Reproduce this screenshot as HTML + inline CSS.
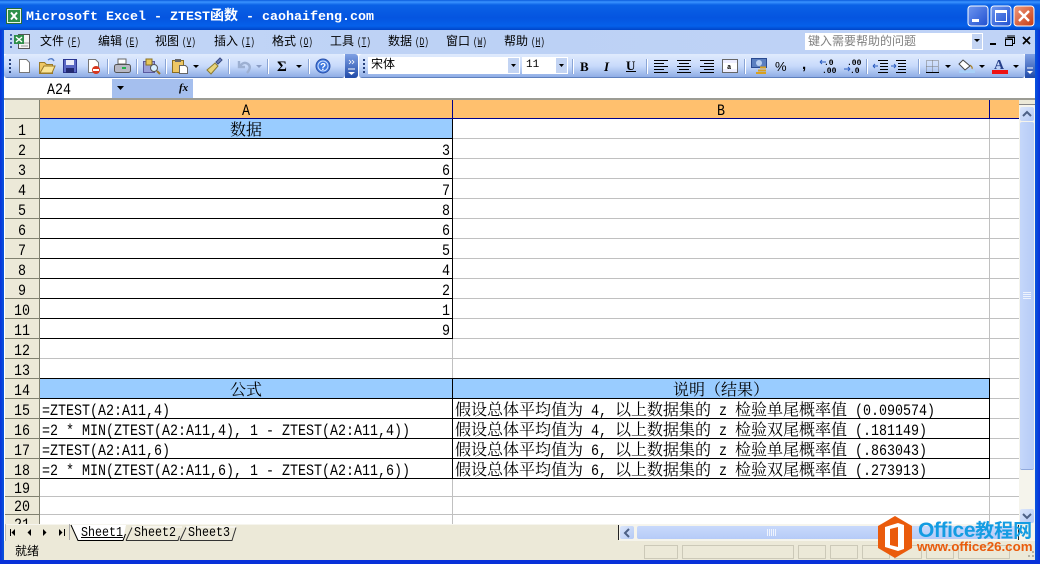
<!DOCTYPE html>
<html lang="zh"><head><meta charset="utf-8"><title>Microsoft Excel</title>
<style>
html,body{margin:0;padding:0;background:#fff}
#w{position:relative;width:1040px;height:564px;overflow:hidden;background:#fff;font-family:"Noto Serif CJK SC","Liberation Mono",serif;font-size:16px;color:#000}
#w div,#w svg{position:absolute}
i{font-style:normal;font-family:"Liberation Mono",monospace;font-size:16px;display:inline-block;transform:scaleX(.8333);transform-origin:0 50%;white-space:pre;text-align:left}
.w8{width:8px}.w16{width:16px}.w24{width:24px}.w32{width:32px}.w80{width:80px}.w88{width:88px}
.tx{white-space:pre;line-height:20px;height:20px}
.rh{left:5px;width:34px;height:19px;background:#ece9d8;border-bottom:1px solid #808070;border-right:1px solid #808070;text-align:center;line-height:20px;overflow:hidden}
.g{height:1px;background:#c0c0c0;left:40px;width:979px}
.k{height:1px;background:#000;left:40px}
.n{left:40px;width:410px;text-align:right;line-height:20px;height:19px}
.m{top:33px;font-family:"Noto Sans CJK SC",sans-serif;font-size:12px;line-height:16px;white-space:pre;color:#000}
.m i{font-size:11px;transform:scaleX(.7);margin-left:3px;width:14px}
.sep{top:59px;width:1px;height:15px;background:#8aa5d6;box-shadow:1px 0 0 #fff}
.s{top:522px;font-size:14px;line-height:18px;height:18px;white-space:pre}
.s i{font-size:14px}
.b{top:545px;height:12px;border:1px solid #ccc9b8}
</style></head><body>
<div id="w">
<!-- title bar -->
<div style="left:0;top:0;width:1040px;height:30px;background:linear-gradient(#0a5bdc 0,#3a93ff 2px,#0a62e6 5px,#0555e0 18px,#0560ea 26px,#0045c8 30px)"></div>
<svg style="left:6px;top:8px" width="16" height="16" viewBox="0 0 16 16"><rect x=".5" y=".5" width="15" height="15" fill="#e8f4e8" stroke="#2a6d3a"/><rect x="2" y="2" width="12" height="12" fill="#2f8f4a"/><path d="M5 4.500l6 7M11 4.500l-6 7" stroke="#fff" stroke-width="2"/></svg>
<div style="left:26px;top:7px;color:#fff;font-weight:bold;white-space:pre;line-height:17px;font-size:14px;font-family:'Noto Sans CJK SC',sans-serif"><span style="font:bold 13.33px 'Liberation Mono',monospace">Microsoft Excel - ZTEST</span>函数<span style="font:bold 13.33px 'Liberation Mono',monospace"> - caohaifeng.com</span></div>
<svg style="left:967px;top:5px" width="68" height="22" viewBox="0 0 68 22">
<defs><linearGradient id="bb" x1="0" y1="0" x2="1" y2="1"><stop offset="0" stop-color="#6f97ef"/><stop offset="1" stop-color="#1f4fd0"/></linearGradient><linearGradient id="rb" x1="0" y1="0" x2="1" y2="1"><stop offset="0" stop-color="#ef9a7c"/><stop offset="1" stop-color="#c63a12"/></linearGradient></defs>
<rect x="1" y="1" width="20" height="20" rx="3" fill="url(#bb)" stroke="#fff"/><rect x="5" y="14" width="7" height="3" fill="#fff"/>
<rect x="24" y="1" width="20" height="20" rx="3" fill="url(#bb)" stroke="#fff"/><rect x="28.5" y="5.5" width="11" height="11" fill="none" stroke="#fff"/><rect x="28" y="5" width="12" height="3" fill="#fff"/>
<rect x="47" y="1" width="20" height="20" rx="3" fill="url(#rb)" stroke="#fff"/><path d="M52 6l10 10M62 6l-10 10" stroke="#fff" stroke-width="2.4"/></svg>
<!-- menu bar -->
<div style="left:4px;top:30px;width:1031px;height:24px;background:linear-gradient(90deg,#c3d6f6,#bcd1f5 50%,#c0d3f6)"></div>
<svg style="left:9px;top:32px" width="24" height="20" viewBox="0 0 24 20"><path d="M1 3h2M1 7h2M1 11h2M1 15h2" stroke="#1c3f90" stroke-width="1.4"/><rect x="9.500" y="2.500" width="11" height="14" fill="#f4f4f4" stroke="#555"/><rect x="5" y="3" width="10" height="9" fill="#2f8f4a"/><path d="M7 5l6 5M13 5l-6 5" stroke="#fff" stroke-width="1.4"/><path d="M12 14h7M15 11h5" stroke="#999"/></svg>
<div class="m" style="left:40px">文件<i>(<u>F</u>)</i></div>
<div class="m" style="left:98px">编辑<i>(<u>E</u>)</i></div>
<div class="m" style="left:155px">视图<i>(<u>V</u>)</i></div>
<div class="m" style="left:214px">插入<i>(<u>I</u>)</i></div>
<div class="m" style="left:272px">格式<i>(<u>O</u>)</i></div>
<div class="m" style="left:330px">工具<i>(<u>T</u>)</i></div>
<div class="m" style="left:388px">数据<i>(<u>D</u>)</i></div>
<div class="m" style="left:446px">窗口<i>(<u>W</u>)</i></div>
<div class="m" style="left:504px">帮助<i>(<u>H</u>)</i></div>
<div style="left:805px;top:33px;width:178px;height:17px;background:#fff"></div>
<div style="left:972px;top:34px;width:10px;height:15px;background:#c3d4f3"></div>
<svg style="left:972px;top:38px" width="10" height="6"><path d="M2 1h6l-3 3z" fill="#000"/></svg>
<div class="m" style="left:808px;color:#808080">键入需要帮助的问题</div>
<svg style="left:988px;top:34px" width="46" height="14" viewBox="0 0 46 14"><rect x="2" y="9" width="6" height="2"/><path d="M17.500 5.500h7v6h-7zM19.500 3.500h7v6h-2" fill="none" stroke="#000"/><path d="M17 4h8M19 2h8" stroke="#000"/><path d="M35 3l7 7M42 3l-7 7" stroke="#000" stroke-width="1.7"/></svg>
<!-- toolbars -->
<div style="left:4px;top:54px;width:341px;height:24px;border-radius:3px;background:linear-gradient(#e0ebfd,#c8dafb 50%,#90aee6 95%,#3b5f9f)"></div>
<div style="left:345px;top:54px;width:13px;height:24px;background:linear-gradient(#7fa0e4,#1f4aa8);border-radius:0 3px 3px 0"></div>
<svg style="left:345px;top:54px" width="13" height="24"><path d="M4 6l2 2-2 2M7 6l2 2-2 2" fill="none" stroke="#fff" stroke-width=".8"/><path d="M3 15h7" stroke="#fff"/><path d="M3 18h7l-3.500 3z" fill="#fff"/></svg>
<div style="left:359px;top:54px;width:666px;height:24px;border-radius:3px;background:linear-gradient(#e0ebfd,#c8dafb 50%,#90aee6 95%,#3b5f9f)"></div>
<div style="left:1025px;top:54px;width:10px;height:24px;background:linear-gradient(#7fa0e4,#1f4aa8)"></div>
<svg style="left:1025px;top:66px" width="10" height="12"><path d="M2 2h6" stroke="#fff"/><path d="M2 5h6l-3 3z" fill="#fff"/></svg>
<svg style="left:0;top:54px" width="1040" height="24" viewBox="0 54 1040 24">
<path d="M10 59v2M10 63v2M10 67v2M10 71v2M364 59v2M364 63v2M364 67v2M364 71v2" stroke="#27417c" stroke-width="2"/>
<!-- new --><path d="M19.500 59.500h7l3 3v10h-10z" fill="#fff" stroke="#777"/>
<!-- open --><path d="M39.500 62.500h5l2 2h6v9h-13z" fill="#eec765" stroke="#9a7a28"/><path d="M40 73l4-7h11l-3 7z" fill="#fbe596" stroke="#9a7a28"/><path d="M48 60q4-3 6 1" fill="none" stroke="#5a80c8" stroke-width="1.400"/>
<!-- save --><rect x="63.500" y="59.500" width="13" height="13" fill="#5a68c4" stroke="#2a3590"/><rect x="66" y="60" width="8" height="5" fill="#e9ecfa"/><rect x="66" y="68" width="8" height="5" fill="#222a72"/>
<!-- perm --><path d="M88.500 59.500h7l3 3v10h-10z" fill="#fff" stroke="#777"/><circle cx="96" cy="70" r="4" fill="#d8361c"/><rect x="93" y="69" width="6" height="2" fill="#fff"/>
<!-- print --><path d="M118 59h8v5h-8z" fill="#fff" stroke="#666"/><rect x="114.500" y="64.500" width="16" height="8" rx="2" fill="#b8b8c4" stroke="#555"/><rect x="122" y="67" width="4" height="2" fill="#22b14c"/>
<!-- preview --><path d="M143.500 61.500h11v11h-11z" fill="#9aa0d8" stroke="#5a5aa0"/><path d="M146 59h6v6h-6z" fill="#e8c85a" stroke="#8a7020"/><circle cx="154" cy="68" r="3.500" fill="#d8f0ff" stroke="#555"/><path d="M157 71l3 3" stroke="#a07820" stroke-width="2"/>
<!-- paste --><rect x="172.500" y="60.500" width="11" height="12" fill="#eec765" stroke="#8a6e20"/><rect x="175" y="59" width="6" height="3" fill="#666"/><path d="M179.500 65.500h6l2 2v6h-8z" fill="#fff" stroke="#666"/>
<path d="M193 65h6l-3 3z"/>
<!-- painter --><path d="M207 70l8-7 3 3-7 8z" fill="#e8d47a" stroke="#8a7a30"/><path d="M216 62l4-4 2 2-4 4z" fill="#6a80c0" stroke="#3a4a80"/>
<!-- undo --><path d="M239 61v6h6M240 66q4-5 8-2t-1 9" fill="none" stroke="#9db0d2" stroke-width="2.400"/>
<path d="M256 65h6l-3 3z" fill="#8a9cc4"/>
<!-- sum --><text x="277" y="71" font-family="Liberation Serif,serif" font-size="15" font-weight="bold">Σ</text>
<path d="M296 65h6l-3 3z"/>
<!-- help --><circle cx="323" cy="66" r="7" fill="#3f78de" stroke="#2b51a8"/><circle cx="323" cy="66" r="5" fill="none" stroke="#cfe0ff"/><text x="320" y="70" font-family="Liberation Sans,sans-serif" font-size="10" font-weight="bold" fill="#fff">?</text>
<!-- format icons --><text x="580" y="71" font-family="Liberation Serif,serif" font-size="13" font-weight="bold">B</text>
<text x="604" y="71" font-family="Liberation Serif,serif" font-size="13" font-weight="bold" font-style="italic">I</text>
<text x="626" y="70" font-family="Liberation Serif,serif" font-size="13" font-weight="bold">U</text><path d="M626 71.500h10" stroke="#000"/>
<path d="M654 60.500h14M654 63.500h10M654 66.500h14M654 69.500h10M654 72.500h14" stroke="#000" fill="none"/>
<path d="M677 60.500h14M679 63.500h10M677 66.500h14M679 69.500h10M677 72.500h14" stroke="#000" fill="none"/>
<path d="M700 60.500h14M704 63.500h10M700 66.500h14M704 69.500h10M700 72.500h14" stroke="#000" fill="none"/>
<rect x="722.500" y="59.500" width="15" height="13" fill="#eef" stroke="#666"/><rect x="723" y="63" width="14" height="6" fill="#fff"/><text x="727" y="69" font-family="Liberation Mono,monospace" font-size="7" font-weight="bold">a</text>
<!-- currency --><rect x="751.500" y="58.500" width="15" height="9" fill="#5b7fc0" stroke="#2a4a90"/><ellipse cx="759" cy="63" rx="3" ry="3" fill="#b8cff0"/><path d="M760 67.500h6M758 70.500h8M756 73h10" stroke="#d8a020" stroke-width="2"/>
<text x="775" y="71" font-family="Liberation Sans,sans-serif" font-size="13">%</text>
<text x="802" y="69" font-family="Liberation Sans,sans-serif" font-size="15" font-weight="bold">,</text>
<text x="824" y="65" font-family="Liberation Mono,monospace" font-size="8" font-weight="bold">.0</text><text x="822" y="73" font-family="Liberation Mono,monospace" font-size="8" font-weight="bold">.00</text><path d="M820 62h6M820 62l2-2M820 62l2 2" stroke="#2a5cc0" fill="none"/>
<text x="847" y="65" font-family="Liberation Mono,monospace" font-size="8" font-weight="bold">.00</text><text x="850" y="73" font-family="Liberation Mono,monospace" font-size="8" font-weight="bold">.0</text><path d="M844 69h6M850 69l-2-2M850 69l-2 2" stroke="#2a5cc0" fill="none"/>
<path d="M878 60.500h10M880 63.500h8M880 66.500h8M880 69.500h8M878 72.500h10" stroke="#000" fill="none"/><path d="M873 66h5M873 66l2-2M873 66l2 2" stroke="#2a5cc0" fill="none"/>
<path d="M896 60.500h10M898 63.500h8M898 66.500h8M898 69.500h8M896 72.500h10" stroke="#000" fill="none"/><path d="M891 66h5M896 66l-2-2M896 66l-2 2" stroke="#2a5cc0" fill="none"/>
<!-- borders --><path d="M926.500 60.500h12v12h-12zM926.500 66.500h12M932.500 60.500v12" fill="none" stroke="#777" stroke-dasharray="1 1"/><path d="M926 72.500h13" stroke="#000"/>
<path d="M945 65h6l-3 3z"/>
<!-- fill --><rect x="959" y="70" width="16" height="3" fill="#a8d0f8"/><path d="M963 60l7 6-5 4-6-6z" fill="#fff" stroke="#444"/><path d="M970 65q3 2 2 4" fill="#e0b040" stroke="#a07820"/>
<path d="M979 65h6l-3 3z"/>
<!-- font color --><text x="994" y="69" font-family="Liberation Serif,serif" font-size="14" font-weight="bold" fill="#27408b">A</text><rect x="992" y="70" width="16" height="4" fill="#ee1111"/>
<path d="M1013 65h6l-3 3z"/>
</svg>
<div class="sep" style="left:107px"></div><div class="sep" style="left:136px"></div><div class="sep" style="left:165px"></div><div class="sep" style="left:228px"></div><div class="sep" style="left:267px"></div><div class="sep" style="left:308px"></div>
<div class="sep" style="left:572px"></div><div class="sep" style="left:646px"></div><div class="sep" style="left:744px"></div><div class="sep" style="left:866px"></div><div class="sep" style="left:918px"></div>
<div style="left:368px;top:57px;width:152px;height:17px;background:#fff"></div>
<div style="left:508px;top:58px;width:11px;height:15px;background:#c3d4f3"></div>
<svg style="left:508px;top:63px" width="11" height="6"><path d="M3 1h5l-2.500 3z"/></svg>
<div style="left:522px;top:57px;width:46px;height:17px;background:#fff"></div>
<div style="left:556px;top:58px;width:11px;height:15px;background:#c3d4f3"></div>
<svg style="left:556px;top:63px" width="11" height="6"><path d="M3 1h5l-2.500 3z"/></svg>
<div class="m" style="left:371px;top:56px">宋体</div>
<div class="m" style="left:526px;top:57px;font-family:'Liberation Mono',monospace;font-size:11px">11</div>
<!-- formula bar -->
<div style="left:4px;top:78px;width:1031px;height:20px;background:#fff"></div>
<div style="left:112px;top:79px;width:81px;height:19px;background:#a5bfee"></div>
<div class="tx" style="left:47px;top:78px"><i>A24</i></div>
<svg style="left:117px;top:86px" width="9" height="5"><path d="M0 0h7l-3.500 4z"/></svg>
<div style="left:179px;top:80px;font:italic bold 11px/16px 'Liberation Serif',serif">fx</div>
<div style="left:4px;top:98px;width:1031px;height:2px;background:#9c9c94"></div>
<!-- sheet -->
<div style="left:5px;top:100px;width:34px;height:18px;background:#ece9d8;border-right:1px solid #808070;border-bottom:1px solid #808070"></div>
<div style="left:40px;top:100px;width:979px;height:18px;background:#ffc06e"></div>
<div style="left:40px;top:118px;width:979px;height:1px;background:#00008b"></div>
<div style="left:452px;top:100px;width:1px;height:18px;background:#00008b"></div>
<div style="left:989px;top:100px;width:1px;height:18px;background:#00008b"></div>
<div class="tx" style="left:242px;top:99px"><i>A</i></div>
<div class="tx" style="left:717px;top:99px"><i>B</i></div>
<div class="rh" style="top:119px"><i class="w8">1</i></div><div class="rh" style="top:139px"><i class="w8">2</i></div><div class="rh" style="top:159px"><i class="w8">3</i></div><div class="rh" style="top:179px"><i class="w8">4</i></div><div class="rh" style="top:199px"><i class="w8">5</i></div><div class="rh" style="top:219px"><i class="w8">6</i></div><div class="rh" style="top:239px"><i class="w8">7</i></div><div class="rh" style="top:259px"><i class="w8">8</i></div><div class="rh" style="top:279px"><i class="w8">9</i></div><div class="rh" style="top:299px"><i class="w16">10</i></div><div class="rh" style="top:319px"><i class="w16">11</i></div><div class="rh" style="top:339px"><i class="w16">12</i></div><div class="rh" style="top:359px"><i class="w16">13</i></div><div class="rh" style="top:379px"><i class="w16">14</i></div><div class="rh" style="top:399px"><i class="w16">15</i></div><div class="rh" style="top:419px"><i class="w16">16</i></div><div class="rh" style="top:439px"><i class="w16">17</i></div><div class="rh" style="top:459px"><i class="w16">18</i></div>
<div class="rh" style="top:479px;height:17px;line-height:16px"><i class="w16">19</i></div><div class="rh" style="top:497px;height:17px;line-height:16px"><i class="w16">20</i></div><div class="rh" style="top:515px;height:9px;line-height:16px;border-bottom:0"><i class="w16">21</i></div>
<div class="g" style="top:138px"></div><div class="g" style="top:158px"></div><div class="g" style="top:178px"></div><div class="g" style="top:198px"></div><div class="g" style="top:218px"></div><div class="g" style="top:238px"></div><div class="g" style="top:258px"></div><div class="g" style="top:278px"></div><div class="g" style="top:298px"></div><div class="g" style="top:318px"></div><div class="g" style="top:338px"></div><div class="g" style="top:358px"></div><div class="g" style="top:378px"></div><div class="g" style="top:398px"></div><div class="g" style="top:418px"></div><div class="g" style="top:438px"></div><div class="g" style="top:458px"></div><div class="g" style="top:478px"></div><div class="g" style="top:496px"></div><div class="g" style="top:514px"></div>
<div style="left:452px;top:119px;width:1px;height:405px;background:#c0c0c0"></div>
<div style="left:989px;top:119px;width:1px;height:405px;background:#c0c0c0"></div>
<div style="left:40px;top:119px;width:412px;height:19px;background:#99ccff"></div>
<div style="left:40px;top:379px;width:949px;height:19px;background:#99ccff"></div>
<div class="k" style="top:138px;width:413px"></div><div class="k" style="top:158px;width:413px"></div><div class="k" style="top:178px;width:413px"></div><div class="k" style="top:198px;width:413px"></div><div class="k" style="top:218px;width:413px"></div><div class="k" style="top:238px;width:413px"></div><div class="k" style="top:258px;width:413px"></div><div class="k" style="top:278px;width:413px"></div><div class="k" style="top:298px;width:413px"></div><div class="k" style="top:318px;width:413px"></div><div class="k" style="top:338px;width:413px"></div>
<div class="k" style="top:378px;width:950px"></div><div class="k" style="top:398px;width:950px"></div><div class="k" style="top:418px;width:950px"></div><div class="k" style="top:438px;width:950px"></div><div class="k" style="top:458px;width:950px"></div><div class="k" style="top:478px;width:950px"></div>
<div style="left:452px;top:119px;width:1px;height:220px;background:#000"></div>
<div style="left:452px;top:378px;width:1px;height:101px;background:#000"></div>
<div style="left:989px;top:378px;width:1px;height:101px;background:#000"></div>
<div class="tx" style="left:230px;top:119px">数据</div>
<div class="n" style="top:139px"><i class="w8">3</i></div><div class="n" style="top:159px"><i class="w8">6</i></div><div class="n" style="top:179px"><i class="w8">7</i></div><div class="n" style="top:199px"><i class="w8">8</i></div><div class="n" style="top:219px"><i class="w8">6</i></div><div class="n" style="top:239px"><i class="w8">5</i></div><div class="n" style="top:259px"><i class="w8">4</i></div><div class="n" style="top:279px"><i class="w8">2</i></div><div class="n" style="top:299px"><i class="w8">1</i></div><div class="n" style="top:319px"><i class="w8">9</i></div>
<div class="tx" style="left:230px;top:379px">公式</div>
<div class="tx" style="left:673px;top:379px">说明（结果）</div>
<div class="tx" style="left:42px;top:399px"><i>=ZTEST(A2:A11,4)</i></div>
<div class="tx" style="left:42px;top:419px"><i>=2 * MIN(ZTEST(A2:A11,4), 1 - ZTEST(A2:A11,4))</i></div>
<div class="tx" style="left:42px;top:439px"><i>=ZTEST(A2:A11,6)</i></div>
<div class="tx" style="left:42px;top:459px"><i>=2 * MIN(ZTEST(A2:A11,6), 1 - ZTEST(A2:A11,6))</i></div>
<div class="tx" style="left:455px;top:399px">假设总体平均值为<i class="w32"> 4, </i>以上数据集的<i class="w24"> z </i>检验单尾概率值<i class="w88"> (0.090574)</i></div>
<div class="tx" style="left:455px;top:419px">假设总体平均值为<i class="w32"> 4, </i>以上数据集的<i class="w24"> z </i>检验双尾概率值<i class="w80"> (.181149)</i></div>
<div class="tx" style="left:455px;top:439px">假设总体平均值为<i class="w32"> 6, </i>以上数据集的<i class="w24"> z </i>检验单尾概率值<i class="w80"> (.863043)</i></div>
<div class="tx" style="left:455px;top:459px">假设总体平均值为<i class="w32"> 6, </i>以上数据集的<i class="w24"> z </i>检验双尾概率值<i class="w80"> (.273913)</i></div>
<!-- v scrollbar -->
<div style="left:1019px;top:100px;width:16px;height:424px;background:#f5f4ec"></div>
<div style="left:1019px;top:100px;width:16px;height:4px;background:#ece9d8;border-bottom:1px solid #888"></div>
<div style="left:1020px;top:107px;width:14px;height:14px;background:linear-gradient(135deg,#dbe6fb,#b4c9f4);border-radius:2px"></div>
<svg style="left:1021px;top:110px" width="12" height="8"><path d="M2 6l4-4 4 4" fill="none" stroke="#4d6185" stroke-width="2"/></svg>
<div style="left:1020px;top:122px;width:14px;height:347px;background:linear-gradient(90deg,#c5d7fa,#b6cbf7);border-radius:2px;box-shadow:0 1px 0 #8fa8dc"></div>
<svg style="left:1023px;top:292px" width="8" height="8"><path d="M0 .5h8M0 2.500h8M0 4.500h8M0 6.500h8" stroke="#eef3fd"/></svg>
<div style="left:1020px;top:509px;width:14px;height:14px;background:linear-gradient(135deg,#dbe6fb,#b4c9f4);border-radius:2px"></div>
<svg style="left:1021px;top:512px" width="12" height="8"><path d="M2 2l4 4 4-4" fill="none" stroke="#4d6185" stroke-width="2"/></svg>
<!-- tabs -->
<div style="left:5px;top:524px;width:1030px;height:17px;background:#ece9d8;border-top:1px solid #f6f5ee;box-sizing:border-box"></div>
<svg style="left:5px;top:524px" width="240" height="18" viewBox="5 524 240 18"><path d="M5 524v17" stroke="#888"/>
<path d="M10.500 529v7" stroke="#000"/><path d="M15 529v7l-3.500-3.500z"/><path d="M31 529v7l-3.500-3.500z"/><path d="M43 529v7l3.500-3.500z"/><path d="M59 529v7l3.500-3.500z"/><path d="M64.500 529v7" stroke="#000"/>
<path d="M69.500 524v16" stroke="#aaa"/>
<path d="M71 525h55l-3 15H78z" fill="#fff"/>
<path d="M132 527h50M186 527h50" stroke="#fff"/>
<path d="M126 540.500h52l1.500-4.500" fill="none" stroke="#333"/>
<path d="M180 540.500h52l4-13M180 540.500l6-13" fill="none" stroke="#333"/>
<path d="M126 540.500l6-13" fill="none" stroke="#333"/>
<path d="M71 525l7 15.500h45l2.500-6.500" fill="none" stroke="#000"/></svg>
<div class="s" style="left:81px"><i><u>Sheet1</u></i></div><div class="s" style="left:134px"><i>Sheet2</i></div><div class="s" style="left:188px"><i>Sheet3</i></div>
<!-- h scrollbar -->
<div style="left:618px;top:525px;width:1px;height:15px;background:#222"></div>
<div style="left:619px;top:525px;width:416px;height:16px;background:#f5f4ec"></div>
<div style="left:620px;top:526px;width:14px;height:13px;background:linear-gradient(135deg,#dbe6fb,#b4c9f4);border-radius:2px"></div>
<svg style="left:622px;top:527px" width="10" height="12"><path d="M7 2l-4 4 4 4" fill="none" stroke="#4d6185" stroke-width="2"/></svg>
<div style="left:637px;top:526px;width:380px;height:13px;background:linear-gradient(#c8d9fb,#b6cbf7);border-radius:2px"></div>
<svg style="left:767px;top:529px" width="9" height="7"><path d="M.5 0v7M2.500 0v7M4.500 0v7M6.500 0v7M8.500 0v7" stroke="#eef3fd"/></svg>
<div style="left:1018px;top:525px;width:1px;height:15px;background:#222"></div>
<!-- status -->
<div style="left:4px;top:541px;width:1031px;height:19px;background:#ece9d8"></div>
<div class="m" style="left:15px;top:543px">就绪</div>
<div class="b" style="left:644px;width:32px"></div><div class="b" style="left:682px;width:110px"></div><div class="b" style="left:798px;width:26px"></div><div class="b" style="left:830px;width:26px"></div><div class="b" style="left:862px;width:26px"></div><div class="b" style="left:894px;width:26px"></div><div class="b" style="left:926px;width:26px"></div><div class="b" style="left:958px;width:50px"></div>
<svg style="left:1024px;top:550px" width="11" height="9"><path d="M8 1h2v2h-2zM4 5h2v2h-2zM8 5h2v2h-2z" fill="#b5b2a2"/></svg>
<!-- window frame -->
<div style="left:0;top:30px;width:4px;height:534px;background:linear-gradient(90deg,#0831d9,#0855dd)"></div>
<div style="left:1035px;top:30px;width:5px;height:534px;background:linear-gradient(90deg,#0855dd,#0831d9)"></div>
<div style="left:0;top:560px;width:1040px;height:4px;background:#0831d9"></div>
<!-- watermark -->
<svg style="left:876px;top:515px" width="38" height="44" viewBox="0 0 38 44"><path d="M19 1l17 10v22L19 43 2 33V11z" fill="#ea5b0c"/><path d="M9 12l13-4 6 2v24l-6 2-13-4z" fill="#fff"/><path d="M14 14l8-2v20l-8-2z" fill="#ea5b0c"/></svg>
<div style="left:918px;top:516px;font:bold 21px/28px 'Liberation Sans','Noto Sans CJK SC',sans-serif;color:#149ce2;white-space:pre;letter-spacing:-.4px">Office<span style="font-family:'Noto Sans CJK SC',sans-serif;font-size:19px;letter-spacing:0">教程网</span></div>
<div style="left:917px;top:538px;font:bold 13.3px/18px 'Liberation Sans',sans-serif;color:#ea5b0c;white-space:pre">www.office26.com</div>
</div>
</body></html>
